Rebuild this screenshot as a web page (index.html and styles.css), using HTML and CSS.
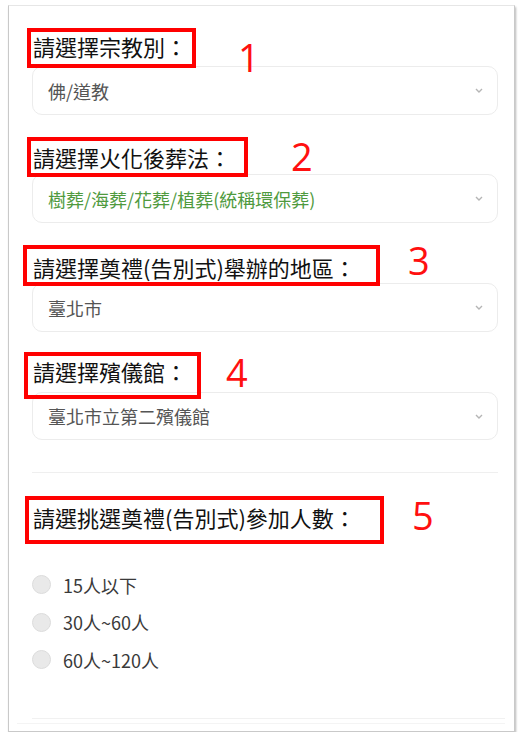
FILE: index.html
```html
<!DOCTYPE html>
<html lang="zh-Hant">
<head>
    <meta charset="UTF-8">
    <meta name="viewport" content="width=device-width, initial-scale=1.0">
    <title>選擇葬禮方式</title>
    <link rel="stylesheet" href="styles.css">
</head>
<body>
    <div class="frame">
        <div class="panel">
            <div class="field field-religion">
                <div class="label-row">
                    <span class="note">請選擇宗教別：</span>
                    <span class="note-num">1</span>
                </div>
                <div class="picker">
                    <span class="picker-text">佛/道教</span>
                    <svg class="chevron" width="8" height="5" viewBox="0 0 8 5"><path d="M1 1l3 3 3-3" fill="none" stroke="#b5b5b5" stroke-width="1.4"/></svg>
                </div>
            </div>

            <div class="field field-method">
                <div class="label-row">
                    <span class="note">請選擇火化後葬法：</span>
                    <span class="note-num">2</span>
                </div>
                <div class="picker">
                    <span class="picker-text picker-green">樹葬/海葬/花葬/植葬(統稱環保葬)</span>
                    <svg class="chevron" width="8" height="5" viewBox="0 0 8 5"><path d="M1 1l3 3 3-3" fill="none" stroke="#b5b5b5" stroke-width="1.4"/></svg>
                </div>
            </div>

            <div class="field field-area">
                <div class="label-row">
                    <span class="note">請選擇奠禮(告別式)舉辦的地區：</span>
                    <span class="note-num">3</span>
                </div>
                <div class="picker">
                    <span class="picker-text">臺北市</span>
                    <svg class="chevron" width="8" height="5" viewBox="0 0 8 5"><path d="M1 1l3 3 3-3" fill="none" stroke="#b5b5b5" stroke-width="1.4"/></svg>
                </div>
            </div>

            <div class="field field-hall">
                <div class="label-row">
                    <span class="note">請選擇殯儀館：</span>
                    <span class="note-num">4</span>
                </div>
                <div class="picker">
                    <span class="picker-text">臺北市立第二殯儀館</span>
                    <svg class="chevron" width="8" height="5" viewBox="0 0 8 5"><path d="M1 1l3 3 3-3" fill="none" stroke="#b5b5b5" stroke-width="1.4"/></svg>
                </div>
            </div>

            <div class="divider"></div>

            <div class="field field-guests">
                <div class="label-row">
                    <span class="note">請選挑選奠禮(告別式)參加人數：</span>
                    <span class="note-num">5</span>
                </div>
                <ul class="radio-list">
                    <li class="radio-row"><span class="radio-dot"></span>15人以下</li>
                    <li class="radio-row"><span class="radio-dot"></span>30人~60人</li>
                    <li class="radio-row"><span class="radio-dot"></span>60人~120人</li>
                </ul>
            </div>

            <div class="divider divider-end"></div>
        </div>
    </div>
</body>
</html>
```

FILE: styles.css
```css
body {
    margin: 0;
    background: #fff;
    font-family: "Noto Sans CJK TC", "Noto Sans", sans-serif;
}

.frame {
    box-sizing: border-box;
    width: 507px;
    height: 727px;
    margin: 5px 0 0 8px;
    border: 1px solid #c9c9c9;
    border-top-color: #e6e6e6;
    box-shadow: 1px 2px 2px rgba(0, 0, 0, 0.28);
    background: #fff;
}

.panel {
    box-sizing: border-box;
    height: 718px;
    margin-left: 8px;
    margin-right: 9px;
    padding: 22px 7px 0 15px;
    border-bottom: 1px solid #f4f4f4;
}

.label-row {
    display: flex;
    align-items: flex-start;
}

.note {
    position: relative;
    z-index: 1;
    display: inline-block;
    border: 4px solid #ff0000;
    font-size: 22px;
    line-height: 28px;
    color: #111;
    white-space: nowrap;
}

.note-num {
    position: relative;
    z-index: 1;
    font-family: "Open Sans", sans-serif;
    font-size: 38px;
    line-height: 1;
    color: #ff1010;
    height: 0;
}

.picker {
    display: flex;
    justify-content: space-between;
    align-items: center;
    box-sizing: border-box;
    width: 466px;
    height: 49px;
    padding: 0 14px 0 15px;
    border: 1px solid #ececec;
    border-radius: 10px;
}

.picker-text {
    font-size: 18px;
    color: #555;
}

.picker-green {
    color: #4f9a3e;
}

.field-religion .note {
    margin-left: -5px;
    padding: 0 5px 4px 2px;
}
.field-religion .note-num {
    margin: 10px 0 0 42px;
}
.field-religion .picker {
    margin-top: -2px;
}

.field-method {
    margin-top: 22px;
}
.field-method .note {
    margin-left: -5px;
    padding: 2px 13px 2px 2px;
}
.field-method .note-num {
    margin: 0 0 0 43px;
}
.field-method .picker {
    margin-top: -3px;
}

.field-area {
    margin-top: 22px;
}
.field-area .note {
    margin-left: -9px;
    padding: 4px 20px 1px 6px;
}
.field-area .note-num {
    margin: -4px 0 0 28px;
}
.field-area .picker {
    margin-top: -3px;
}

.field-hall {
    margin-top: 20px;
}
.field-hall .note {
    margin-left: -8px;
    padding: 1px 10px 10px 5px;
}
.field-hall .note-num {
    margin: 1px 0 0 25px;
}
.field-hall .picker {
    margin-top: -7px;
    height: 48px;
}

.divider {
    width: 466px;
    height: 1px;
    margin-top: 32px;
    background: #efefef;
}

.field-guests {
    margin-top: 23px;
}
.field-guests .note {
    margin-left: -7px;
    padding: 3px 24px 9px 4px;
}
.field-guests .note-num {
    margin: 0 0 0 28px;
}

.radio-list {
    list-style: none;
    margin: 22px 0 0;
    padding: 0;
}

.radio-row {
    display: flex;
    align-items: center;
    height: 37.5px;
    font-size: 18px;
    color: #3a3a3a;
}

.radio-dot {
    box-sizing: border-box;
    width: 19px;
    height: 19px;
    margin-right: 12px;
    border: 1px solid #dcdcdc;
    border-radius: 50%;
    background: #e9e9e9;
}

.divider-end {
    width: 473px;
    margin-top: 39px;
    background: #f1f1f1;
}
```
